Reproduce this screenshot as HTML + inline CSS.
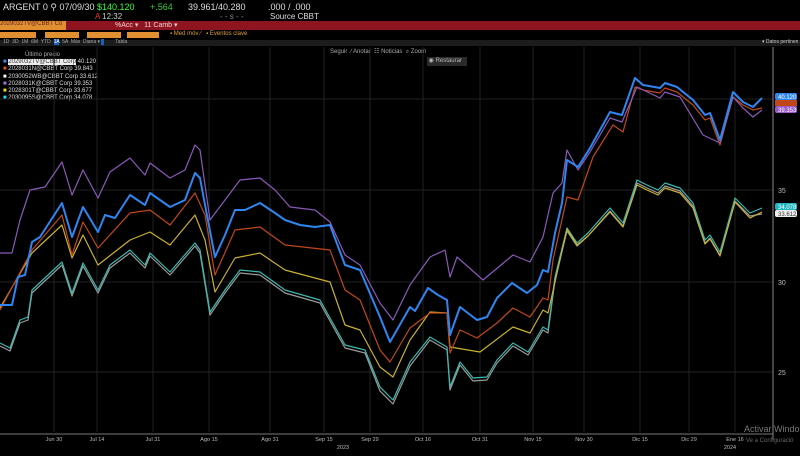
<!DOCTYPE html>
<html><head><meta charset="utf-8"><style>
body{margin:0;background:#000;width:800px;height:456px;overflow:hidden;font-family:"Liberation Sans",sans-serif;position:relative}
.t{position:absolute;white-space:nowrap}
</style></head><body>
<div class="t" style="left:3px;top:2px;font-size:9px;color:#ddd">ARGENT 0 ⚲ 07/09/30 <span style="color:#3f3">$140.120</span></div>
<div class="t" style="left:150px;top:2px;font-size:9px;color:#3c3">+.564</div>
<div class="t" style="left:188px;top:2px;font-size:9px;color:#ddd">39.961/40.280</div>
<div class="t" style="left:268px;top:2px;font-size:9px;color:#ddd">.000 / .000</div>
<div class="t" style="left:95px;top:12px;font-size:8px;color:#ccc"><span style="color:#e33">A</span> 12:32</div>
<div class="t" style="left:220px;top:12px;font-size:8px;color:#888">- - s - -</div>
<div class="t" style="left:270px;top:12px;font-size:8px;color:#ddd">Source CBBT</div>
<div class="t" style="left:0;top:21px;width:800px;height:9px;background:#8e1520"></div>
<div class="t" style="left:0;top:21px;width:66px;height:9px;background:#e09030;font-size:6px;color:#622">2029032TV@CBBT Co</div>
<div class="t" style="left:115px;top:21px;font-size:7px;color:#f0d0d0">%Acc ▾ &nbsp; 11 Camb ▾</div>
<div class="t" style="left:0;top:32px;width:36px;height:6px;background:#e09030"></div>
<div class="t" style="left:45px;top:32px;width:34px;height:6px;background:#e09030"></div>
<div class="t" style="left:87px;top:32px;width:34px;height:6px;background:#e09030"></div>
<div class="t" style="left:127px;top:32px;width:32px;height:6px;background:#e09030"></div>
<div class="t" style="left:170px;top:31px;font-size:6px;color:#e0a030">▪ Med móv ⁄ &nbsp; ▪ Eventos clave</div>
<div class="t" style="left:0;top:40px;width:800px;height:6px;background:#1c1c1c"></div>
<div class="t" style="left:3px;top:39px;font-size:5px;color:#aaa">1D &nbsp;3D &nbsp;1M &nbsp;6M &nbsp;YTD &nbsp;<span style="background:#1a60c0;color:#fff">1A</span> &nbsp;5A &nbsp;Máx &nbsp;Diaria ▾ <span style="background:#1a60c0">&nbsp;&nbsp;</span> &nbsp; &nbsp; &nbsp; &nbsp;Tabla</div>
<div class="t" style="left:762px;top:39px;font-size:5px;color:#ccc">▾ Datos pertinen</div>
<div class="t" style="left:330px;top:48px;font-size:6px;color:#aaa">Seguir &nbsp;⁄ Anotar &nbsp;☷ Noticias &nbsp;⌕ Zoom</div>
<div class="t" style="left:427px;top:57px;width:40px;height:9px;background:#2a2a2a;font-size:6px;color:#bbb;line-height:9px">&nbsp;◉ Restaurar</div>
<div class="t" style="left:25px;top:52px;font-size:6px;color:#aaa">Último precio</div>
<div class="t" style="left:3px;top:59px;font-size:6px;color:#ddd;line-height:7.3px">
<span style="color:#3a8ef0">■</span> <span style="background:#eee;color:#333">2029032TV@CBBT Corp</span> 40.120<br>
<span style="color:#e05020">■</span> 2028031N@CBBT Corp 39.843<br>
<span style="color:#fff">■</span> 2030052WB@CBBT Corp 33.612<br>
<span style="color:#b070f0">■</span> 2028031K@CBBT Corp 39.353<br>
<span style="color:#f0e020">■</span> 2028301T@CBBT Corp 33.677<br>
<span style="color:#20e0e0">■</span> 2030095S@CBBT Corp 34.078</div>
<svg class="t" style="left:0;top:0" width="800" height="456">
<g stroke="#222" stroke-width="1">
<line x1="54" y1="47" x2="54" y2="432"/><line x1="97" y1="47" x2="97" y2="432"/><line x1="153" y1="47" x2="153" y2="432"/><line x1="209" y1="47" x2="209" y2="432"/><line x1="270" y1="47" x2="270" y2="432"/><line x1="324" y1="47" x2="324" y2="432"/><line x1="370" y1="47" x2="370" y2="432"/><line x1="423" y1="47" x2="423" y2="432"/><line x1="480" y1="47" x2="480" y2="432"/><line x1="533" y1="47" x2="533" y2="432"/><line x1="584" y1="47" x2="584" y2="432"/><line x1="640" y1="47" x2="640" y2="432"/><line x1="689" y1="47" x2="689" y2="432"/><line x1="735" y1="47" x2="735" y2="432"/>
<line x1="0" y1="99" x2="773" y2="99"/><line x1="0" y1="190" x2="773" y2="190"/><line x1="0" y1="282" x2="773" y2="282"/><line x1="0" y1="372" x2="773" y2="372"/>
</g>
<line x1="773" y1="47" x2="773" y2="440" stroke="#888"/>
<line x1="0" y1="434" x2="773" y2="434" stroke="#777"/>
<g fill="none" stroke-linejoin="round">
<polyline stroke="#9a9a9a" stroke-width="1.2" points="0,346 10,351 20,323 28,320 32,293 62,265 72,296 83,266 98,293 110,268 130,253 145,268 150,256 170,275 195,246 200,253 210,315 225,293 240,273 260,275 285,293 320,303 345,348 365,353 380,391 393,404 410,366 430,340 447,350 450,390 460,365 473,381 487,380 497,363 513,346 528,355 543,330 548,333 555,280 567,231 577,246 588,236 610,211 623,226 637,183 647,188 658,193 665,186 680,191 693,206 705,243 710,238 720,255 735,201 750,216 762,214"/>
<polyline stroke="#3bb8b0" stroke-width="1.2" points="0,343 10,348 20,320 28,317 32,290 62,262 72,293 83,263 98,290 110,265 130,250 145,265 150,253 170,272 195,243 200,250 210,312 225,290 240,270 260,272 285,290 320,300 345,345 365,350 380,387 393,400 410,362 430,337 447,347 450,387 460,362 473,378 487,377 497,360 513,343 528,352 543,327 548,330 555,277 567,228 577,243 588,233 610,208 623,223 637,180 647,185 658,190 665,183 680,188 693,203 705,240 710,235 720,252 735,198 750,213 762,208"/>
<polyline stroke="#c9b030" stroke-width="1.2" points="0,308 32,253 62,225 72,258 83,235 98,265 130,240 150,232 170,245 195,215 205,240 215,292 235,258 260,253 285,270 330,282 345,325 360,330 380,367 393,377 410,340 430,312 447,313 450,347 480,352 513,327 530,333 543,310 548,313 560,260 567,229 577,245 588,236 610,212 623,227 637,185 647,190 658,195 665,188 680,193 693,208 705,244 710,239 720,256 735,202 750,218 762,212"/>
<polyline stroke="#c04818" stroke-width="1.2" points="0,310 32,250 62,215 72,255 83,222 98,248 130,213 150,210 170,225 195,193 205,215 215,275 235,230 260,227 285,245 330,250 345,290 360,300 380,350 390,362 410,328 430,313 447,313 450,353 460,330 477,338 497,323 513,308 530,317 543,298 548,300 553,260 567,197 578,200 593,157 613,125 623,132 635,87 643,90 660,93 665,88 677,92 693,105 705,120 710,118 720,145 733,97 743,105 753,110 762,108"/>
<polyline stroke="#8a5ab8" stroke-width="1.2" points="0,253 12,253 20,220 30,190 45,187 62,162 72,195 83,170 98,198 110,172 130,158 145,175 150,163 170,178 185,170 195,145 200,150 210,220 225,200 240,180 260,178 275,190 290,207 315,210 330,222 345,255 360,265 380,303 393,320 410,285 430,257 445,250 450,277 457,257 483,280 513,255 530,262 543,237 553,193 562,183 567,150 578,170 590,152 610,118 622,122 637,87 660,98 665,92 680,97 703,135 720,143 733,97 743,108 753,117 762,110"/>
<polyline stroke="#2f86f0" stroke-width="2" points="0,305 12,305 18,277 25,275 32,242 40,237 62,203 72,237 83,207 98,232 105,215 115,218 130,195 145,205 150,193 170,207 185,200 195,173 200,178 205,205 215,257 225,235 235,210 245,210 260,203 275,213 285,220 300,225 315,227 330,225 345,265 360,270 380,317 390,342 410,307 415,311 428,288 438,295 447,300 450,335 460,307 477,320 487,317 497,298 512,283 527,293 537,285 543,270 548,272 555,233 562,203 567,160 578,167 590,148 610,112 622,115 635,78 643,85 660,88 665,83 677,87 693,100 705,115 710,113 720,140 733,92 743,102 753,107 762,98"/>
</g>
<g font-size="6" fill="#fff" font-family="Liberation Sans,sans-serif">
<rect x="775" y="93" width="22" height="7" rx="2" fill="#2f86f0"/><text x="778" y="99">40.120</text>
<rect x="775" y="100" width="22" height="6" fill="#c04818"/>
<rect x="775" y="106" width="22" height="7" rx="2" fill="#9a5ac8"/><text x="778" y="112">39.353</text>
<rect x="775" y="203" width="22" height="7" rx="2" fill="#20b8c0"/><text x="778" y="209">34.078</text>
<rect x="775" y="210" width="22" height="7" rx="2" fill="#eee"/><text x="778" y="216" fill="#333">33.612</text>
</g>
<g font-size="7" fill="#bbb" font-family="Liberation Sans,sans-serif">
<text x="778" y="193">35</text><text x="778" y="285">30</text><text x="778" y="375">25</text>
</g>
<g font-size="5.5" fill="#bbb" font-family="Liberation Sans,sans-serif" text-anchor="middle">
<text x="54" y="441">Jun 30</text><text x="97" y="441">Jul 14</text><text x="153" y="441">Jul 31</text><text x="209" y="441">Ago 15</text><text x="270" y="441">Ago 31</text><text x="324" y="441">Sep 15</text><text x="370" y="441">Sep 29</text><text x="423" y="441">Oct 16</text><text x="480" y="441">Oct 31</text><text x="533" y="441">Nov 15</text><text x="584" y="441">Nov 30</text><text x="640" y="441">Dic 15</text><text x="689" y="441">Dic 29</text><text x="735" y="441">Ene 16</text>
<text x="343" y="449">2023</text><text x="730" y="449">2024</text>
</g>
<text x="744" y="432" font-size="9" fill="#777" font-family="Liberation Sans,sans-serif">Activar Windo</text>
<text x="746" y="442" font-size="6" fill="#666" font-family="Liberation Sans,sans-serif">Ve a Configuració</text>
</svg>
</body></html>
